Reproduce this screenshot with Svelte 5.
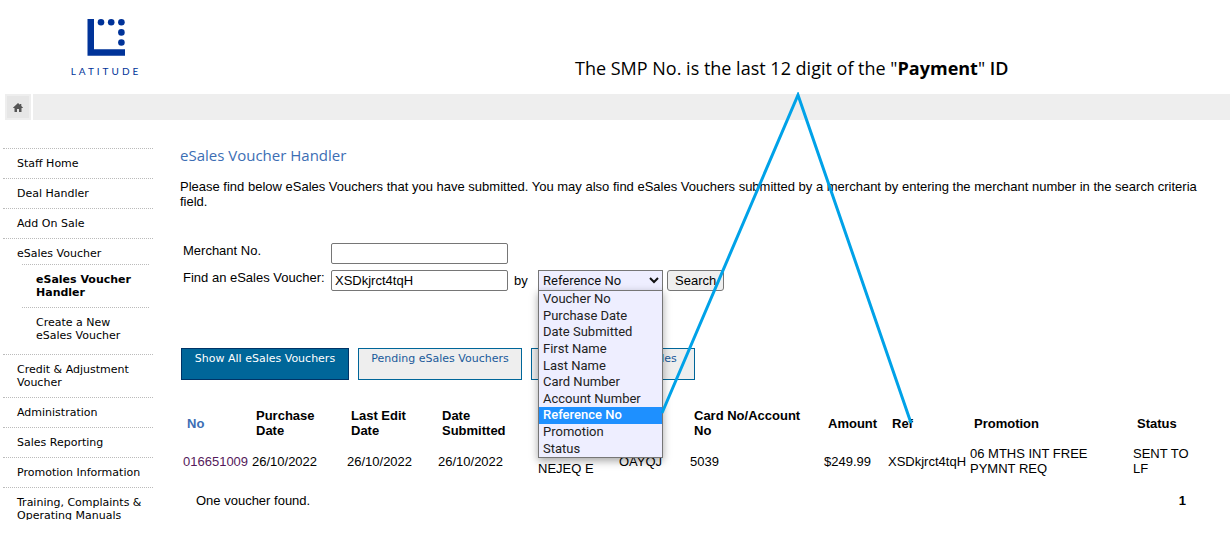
<script lang="ts">
  interface MenuItem {
    label: string;
    children?: { label: string; current?: boolean }[];
  }

  const menu: MenuItem[] = [
    { label: "Staff Home" },
    { label: "Deal Handler" },
    { label: "Add On Sale" },
    {
      label: "eSales Voucher",
      children: [
        { label: "eSales Voucher Handler", current: true },
        { label: "Create a New eSales Voucher" },
      ],
    },
    { label: "Credit & Adjustment Voucher" },
    { label: "Administration" },
    { label: "Sales Reporting" },
    { label: "Promotion Information" },
    { label: "Training, Complaints & Operating Manuals" },
  ];

  const fields = [
    "Voucher No",
    "Purchase Date",
    "Date Submitted",
    "First Name",
    "Last Name",
    "Card Number",
    "Account Number",
    "Reference No",
    "Promotion",
    "Status",
  ];

  const filters = [
    "Show All eSales Vouchers",
    "Pending eSales Vouchers",
    "Recently Closed eSales",
  ];

  let merchantNo = $state("");
  let query = $state("XSDkjrct4tqH");
  let searchBy = $state("Reference No");
  let listOpen = $state(true);
  let activeFilter = $state(filters[0]);

  function pick(field: string) {
    searchBy = field;
    listOpen = false;
  }

  function toggleList(event: MouseEvent) {
    event.preventDefault();
    listOpen = !listOpen;
  }
</script>

<div class="page">
  <header>
    <a class="logo" href="/" aria-label="Latitude">
      <svg width="39" height="38" viewBox="0 0 39 38" aria-hidden="true">
        <path d="M0.5 0h6.5v30.3h31v6.5H0.5z" />
        <circle cx="14" cy="3.3" r="3.3" />
        <circle cx="24.2" cy="3.3" r="3.3" />
        <circle cx="34.4" cy="3.3" r="3.3" />
        <circle cx="34.4" cy="13.4" r="3.3" />
        <circle cx="34.4" cy="23.5" r="3.3" />
      </svg>
      <span class="wordmark">LATITUDE</span>
    </a>
    <p class="note">The SMP No. is the last 12 digit of the "<b>Payment</b>" <b class="id">ID</b></p>
  </header>

  <div class="topbar">
    <a class="home" href="/" aria-label="Home">
      <svg width="10" height="9" viewBox="0 0 10 9" aria-hidden="true">
        <path d="M5 0L7 1.8V1H8.3V3L10 4.7V5H8.5V9H6V6H4V9H1.5V5H0V4.7z" />
      </svg>
    </a>
    <div class="strip"></div>
  </div>

  <div class="body">
    <nav>
      <ul>
        {#each menu as item}
          <li>
            <a href="/">{item.label}</a>
            {#if item.children}
              <ul class="sub">
                {#each item.children as child}
                  <li class:current={child.current}><a href="/">{child.label}</a></li>
                {/each}
              </ul>
            {/if}
          </li>
        {/each}
      </ul>
    </nav>

    <main>
      <h1>eSales Voucher Handler</h1>
      <p class="intro">
        Please find below eSales Vouchers that you have submitted. You may also find eSales Vouchers
        submitted by a merchant by entering the merchant number in the search criteria field.
      </p>

      <form onsubmit={(event) => event.preventDefault()}>
        <label for="merchant">Merchant No.</label>
        <div class="controls">
          <input id="merchant" type="text" bind:value={merchantNo} />
        </div>
        <label for="query">Find an eSales Voucher:</label>
        <div class="controls">
          <input id="query" type="text" bind:value={query} />
          <label class="by" for="field">by</label>
          <div class="picker">
            <select id="field" bind:value={searchBy} onmousedown={toggleList}>
              {#each fields as field}
                <option>{field}</option>
              {/each}
            </select>
            <svg class="chevron" width="10" height="7" viewBox="0 0 10 7" aria-hidden="true">
              <path d="M1 1l4 4 4-4" />
            </svg>
            {#if listOpen}
              <div class="list" role="listbox" aria-label="Search by">
                {#each fields as field}
                  <button
                    type="button"
                    role="option"
                    aria-selected={field === searchBy}
                    class:selected={field === searchBy}
                    onclick={() => pick(field)}>{field}</button
                  >
                {/each}
              </div>
            {/if}
          </div>
          <button class="search" type="submit">Search</button>
        </div>
      </form>

      <div class="filters">
        {#each filters as filter}
          <button
            type="button"
            class:active={filter === activeFilter}
            onclick={() => (activeFilter = filter)}>{filter}</button
          >
        {/each}
      </div>

      <table>
        <colgroup>
          <col style="width: 70px" />
          <col style="width: 95px" />
          <col style="width: 91px" />
          <col style="width: 100px" />
          <col style="width: 81px" />
          <col style="width: 71px" />
          <col style="width: 134px" />
          <col style="width: 64px" />
          <col style="width: 82px" />
          <col />
          <col style="width: 83px" />
        </colgroup>
        <thead>
          <tr>
            <th><a href="/">No</a></th>
            <th>Purchase<br />Date</th>
            <th>Last Edit<br />Date</th>
            <th>Date<br />Submitted</th>
            <th></th>
            <th></th>
            <th>Card No/Account No</th>
            <th>Amount</th>
            <th>Ref</th>
            <th>Promotion</th>
            <th>Status</th>
          </tr>
        </thead>
        <tbody>
          <tr>
            <td><a href="/">016651009</a></td>
            <td>26/10/2022</td>
            <td>26/10/2022</td>
            <td>26/10/2022</td>
            <td><br />NEJEQ E</td>
            <td>OAYQJ</td>
            <td>5039</td>
            <td>$249.99</td>
            <td>XSDkjrct4tqH</td>
            <td>06 MTHS INT FREE<br />PYMNT REQ</td>
            <td>SENT TO<br />LF</td>
          </tr>
        </tbody>
      </table>

      <div class="summary">
        <span>One voucher found.</span>
        <b>1</b>
      </div>
    </main>
  </div>

  <svg class="pointer" width="260" height="336" viewBox="0 0 260 336" aria-hidden="true">
    <path d="M2 321L138 3L251 331" />
  </svg>
</div>

<style>
  :global(body) {
    background: #fff;
  }

  .page {
    position: relative;
    font: 13px/15px "Liberation Sans", Arial, sans-serif;
    color: #000;
  }

  a {
    color: inherit;
    text-decoration: none;
  }

  header {
    display: flex;
    height: 94px;
  }

  .logo {
    display: flex;
    flex-direction: column;
    align-items: center;
    gap: 7px;
    width: 212px;
    padding-top: 19px;
    color: #003399;
    fill: #003399;
  }

  .wordmark {
    font: 10px/14px Lato, sans-serif;
    letter-spacing: 3px;
  }

  .note {
    margin: 56px 0 0 363px;
    font: 18px/24px "Open Sans", "Noto Sans", sans-serif;
    white-space: nowrap;
  }

  .note b {
    font-weight: 700;
  }

  .note .id {
    font-weight: 600;
  }

  .topbar {
    display: flex;
    gap: 2px;
    height: 26px;
    padding-left: 5px;
  }

  .home {
    display: flex;
    align-items: center;
    justify-content: center;
    box-sizing: border-box;
    width: 26px;
    border: 2px solid #eee;
    background: #e6e6e6;
    fill: #555;
  }

  .strip {
    flex: 1;
    background: #eee;
  }

  .body {
    display: flex;
    gap: 27px;
    padding: 28px 16px 0 3px;
  }

  nav {
    flex: none;
    width: 150px;
    max-height: 372px;
    overflow: hidden;
    font: 11px/13px "DejaVu Sans", Verdana, sans-serif;
  }

  ul {
    margin: 0;
    padding: 0;
    list-style: none;
  }

  nav li {
    border-top: 1px dotted #bbb;
  }

  nav li a {
    display: block;
    padding: 8px 4px 8px 14px;
  }

  .sub {
    margin: -4px 4px 4px 19px;
  }

  .current {
    font-weight: bold;
  }

  main {
    flex: 1;
    min-width: 0;
  }

  h1 {
    margin: 0 0 17px;
    font: 15px/14px "Open Sans", sans-serif;
    color: #3c6eb4;
  }

  .intro {
    margin: 0;
  }

  form {
    display: grid;
    grid-template-columns: 148px 1fr;
    row-gap: 6px;
    margin: 34px 0 57px 3px;
  }

  input {
    box-sizing: border-box;
    width: 177px;
    height: 21px;
    padding: 1px 3px;
    border: 1px solid #767676;
    border-radius: 2px;
    font: inherit;
  }

  .controls {
    display: flex;
  }

  .by {
    width: 24px;
    padding: 3px 0 0 6px;
  }

  .picker {
    position: relative;
    width: 125px;
    font: 13px/16px Roboto, sans-serif;
  }

  select {
    appearance: none;
    display: block;
    width: 100%;
    height: 21px;
    padding: 0 4px;
    border: 1px solid #767676;
    border-radius: 0;
    background: #eeeeff;
    font: inherit;
    color: #111;
  }

  .chevron {
    position: absolute;
    top: 7px;
    right: 4px;
    fill: none;
    stroke: #111;
    stroke-width: 2;
  }

  .list {
    position: absolute;
    top: 20px;
    left: 0;
    z-index: 1;
    display: flex;
    flex-direction: column;
    box-sizing: border-box;
    width: 100%;
    height: 168px;
    border: 1px solid #767676;
    background: #eeeeff;
    box-shadow: 0 3px 8px rgba(0, 0, 0, 0.35);
  }

  .list button {
    flex: 1;
    min-height: 0;
    padding: 0 4px;
    border: 0;
    background: none;
    font: inherit;
    text-align: left;
    color: #222;
  }

  .list .selected {
    background: #1e90ff;
    font-weight: 500;
    color: #fff;
  }

  .search {
    height: 21px;
    margin-left: 4px;
    padding: 0 7px;
    border: 1px solid #767676;
    border-radius: 3px;
    background: #efefef;
    font: inherit;
  }

  .filters {
    display: flex;
    gap: 9px;
    margin-left: 1px;
  }

  .filters button {
    display: flex;
    justify-content: center;
    box-sizing: border-box;
    width: 164px;
    height: 32px;
    padding: 3px 0 0;
    border: 1px solid #006699;
    background: #eee;
    font: 11px/13px "DejaVu Sans", Verdana, sans-serif;
    color: #1a5a9a;
  }

  .filters .active {
    width: 168px;
    border-color: #003366;
    background: #006699;
    color: #fff;
  }

  table {
    width: 100%;
    margin: 28px 0 0 1px;
    border-collapse: collapse;
    table-layout: fixed;
  }

  th,
  td {
    padding: 0 0 0 1px;
    text-align: left;
    white-space: nowrap;
  }

  th {
    padding: 0 20px 8px 5px;
    white-space: normal;
  }

  td:first-child {
    padding-left: 2px;
  }

  th:first-child {
    padding-left: 6px;
  }

  th a {
    color: #3c6eb4;
  }

  td a {
    color: #551a5b;
  }

  .summary {
    display: flex;
    justify-content: space-between;
    padding: 17px 28px 0 16px;
  }

  .pointer {
    position: absolute;
    top: 92px;
    left: 660px;
    z-index: 2;
    fill: none;
    stroke: #00a2e8;
    stroke-width: 3;
    pointer-events: none;
  }
</style>
